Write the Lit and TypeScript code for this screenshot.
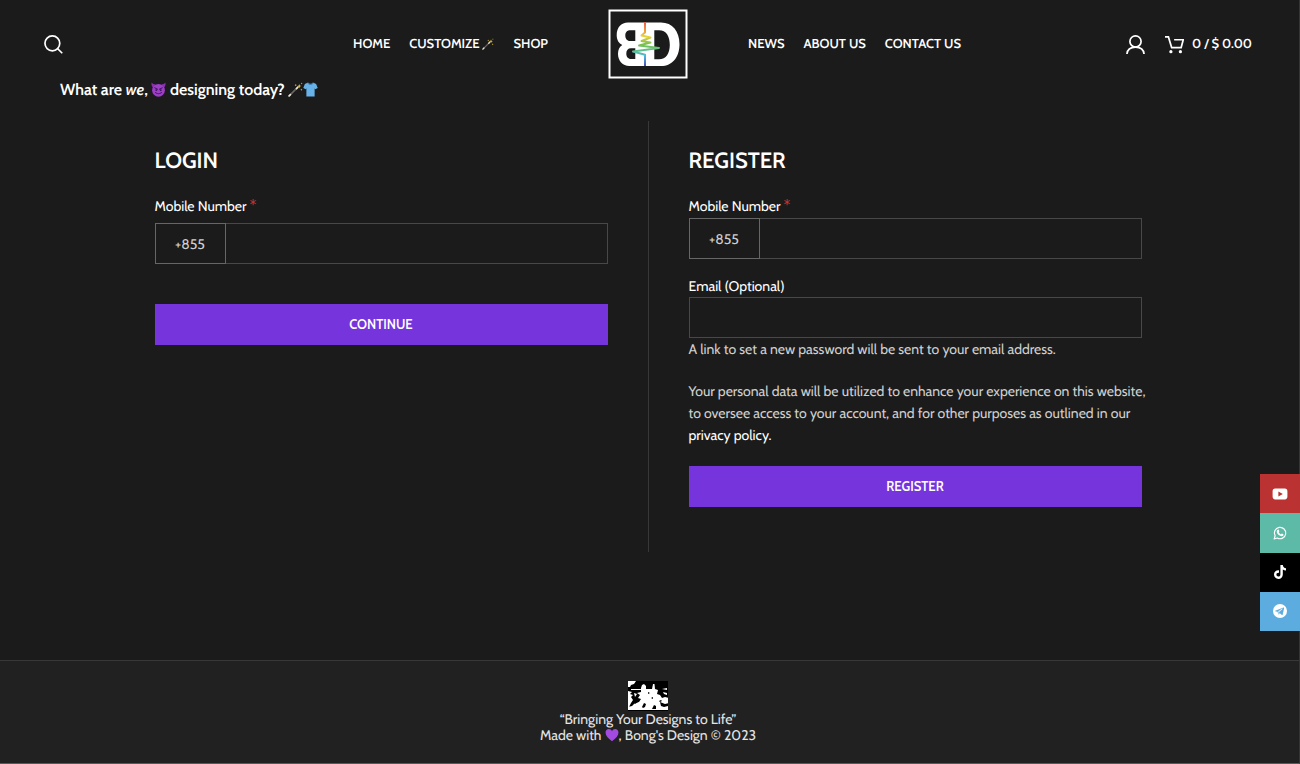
import { LitElement, html, css, svg } from "lit";
import { customElement } from "lit/decorators.js";

const wand = html`<svg class="emoji" viewBox="0 0 16 16" role="img" aria-label="magic wand">
  <path d="M1.2 14.8 10 6" stroke="#6b6660" stroke-width="1.7" stroke-linecap="round" />
  <path d="M1.2 14.8 2.6 13.4M9 7l1.6-1.6" stroke="#e9e4d6" stroke-width="1.7" stroke-linecap="round" />
  <path d="m12 2 .6 1.7 1.8.5-1.7.7-.5 1.8-.7-1.7-1.8-.6 1.7-.6zM8.300 2l.3.9.9.3-.9.4-.3.9-.4-.9-.9-.4.9-.3zM14.300 7l.3.9.9.3-.9.4-.3.9-.4-.9-.9-.4.9-.3zM14.600.4l.3.8.8.3-.8.3-.3.8-.3-.8-.8-.3.8-.3z" fill="#e8c63c" />
</svg>`;

const devil = html`<svg class="emoji" viewBox="0 0 16 16" role="img" aria-label="smiling devil">
  <path d="M.6.6C.2 3.200.8 5 2.400 6L5 2.700C3.200 2.700 1.600 2 .6.6zM15.400.6c.4 2.600-.2 4.400-1.800 5.400L11 2.700c1.800 0 3.400-.7 4.400-2.100z" fill="#8a2fb0" />
  <circle cx="8" cy="8.800" r="6.800" fill="#9b3fc4" />
  <path d="m4 6.200 3 1.500M12 6.200 9 7.700" stroke="#3d0d58" stroke-width="1" stroke-linecap="round" />
  <circle cx="5.600" cy="8.600" r="1" fill="#3d0d58" /><circle cx="10.400" cy="8.600" r="1" fill="#3d0d58" />
  <path d="M4.800 11.200c1.800 1.800 4.600 1.800 6.400 0" stroke="#3d0d58" stroke-width="1.100" fill="none" stroke-linecap="round" />
</svg>`;

const shirt = html`<svg class="emoji" viewBox="0 0 16 16" role="img" aria-label="t-shirt">
  <path d="M5.400.6 2 2 .3 6.400l2.700 1.200.6-1v8.800h8.800V6.600l.6 1 2.700-1.200L14 2 10.600.6C9.600 2.400 6.400 2.400 5.400.6z" fill="#67b2e8" />
  <path d="M5.400.8c1 1.800 4.200 1.800 5.200 0l.7.3C10.300 3.700 5.700 3.700 4.700 1.100z" fill="#2f78b4" />
</svg>`;

const heart = html`<svg class="emoji" viewBox="0 0 16 16" role="img" aria-label="purple heart">
  <path d="M8 15C3.500 11.700.6 8.800.6 5.200.6 2.800 2.300 1.200 4.300 1.200 6 1.200 7.300 2.200 8 3.600c.7-1.400 2-2.400 3.700-2.400 2 0 3.700 1.600 3.700 4C15.400 8.800 12.500 11.700 8 15z" fill="#a34be0" />
</svg>`;

const logo = html`<svg class="logo" viewBox="0 0 80 70" role="img" aria-label="Bong's Design">
  <defs>
    <linearGradient id="pulse" gradientUnits="userSpaceOnUse" x1="0" y1="13" x2="0" y2="57">
      <stop offset="0" stop-color="#e8604a" /><stop offset=".2" stop-color="#ef9a3c" />
      <stop offset=".32" stop-color="#ead23c" /><stop offset=".5" stop-color="#7cc04c" />
      <stop offset=".68" stop-color="#58c09c" /><stop offset=".78" stop-color="#4cb4e0" />
      <stop offset="1" stop-color="#4a50b8" />
    </linearGradient>
  </defs>
  <rect x="1.500" y="1.500" width="77" height="67" fill="none" stroke="#fff" stroke-width="2" />
  <path fill="#fff" fill-rule="evenodd" d="M20 13.500h33c11.500 0 18.500 9 18.500 21.700S64.500 57 53 57H21.500C14.500 57 10 51.500 10 45c0-4.600 1.500-7.300 4.300-9-3.300-1.600-5.600-4.700-5.600-10C8.700 18.500 13 13.500 20 13.500zM27.300 21.300H22c-3 0-4.700 2.200-4.700 5.200s1.700 5.500 4.700 5.500h5.300zM27.300 39.300H23c-3 0-4.700 2-4.700 5.200s1.700 5.500 4.700 5.500h4.300zM46.300 21.300V50.300H51c7.300 0 10.800-6 10.800-14.500S58.300 21.300 51 21.300z" />
  <path d="M37 13v10.500l-3.500 3 9 2-9 3.500 9 1.500-11.500 3L51 39 25 42.500l12 3.300V57" fill="none" stroke="url(#pulse)" stroke-width="2" stroke-linejoin="round" />
</svg>`;

const mark = html`<svg class="mark" viewBox="0 0 40 30" role="img" aria-label="Brand mark">
  <rect width="40" height="30" fill="#000" />
  <path fill="#fff" d="M0 0h8L6 3 3 4 2 6H0zM3 8h10v-1l1-3 2-1 2 2v3h6l1-5h1.500l.5 5 3 1-1 4 3 1 2 3 3-1 4 1v5l-4 1-5-2 1 4 3 1 4-1v4H0v-3l4-1 3-3 4-1 2-3-3-1 2-3-3-2 4-1V9H3zM0 10l4 1-2 2 3 1-2 2 2 3-2 3-2 4H0zM34 8l5-1v2zM35 11l4 1v2l-3-1zM6 12l3 1-2 3z" />
  <path fill="#000" d="m16 22 2 1-1 3-2 1-1-1zM26 24l2 1v3h-4zM20 11l2 1-2 1zM6 22l3-2 1 1-3 2zM31 20l2-1 1 1-2 1zM23 17l2-1v2z" />
</svg>`;

const socials = [
  { name: "YouTube", cls: "youtube", art: svg`<path fill="#fff" d="M3.200 2.600h9.600Q15.400 2.600 15.400 5.400v5.200q0 2.800-2.600 2.800H3.200Q.6 13.400.6 10.600V5.400q0-2.800 2.600-2.800z"/><path fill="#bb3232" d="m6.400 5.500 4.400 2.500-4.400 2.500z"/>` },
  { name: "WhatsApp", cls: "whatsapp", art: svg`<path d="m2.200 14 .9-3.200a5.700 5.700 0 1 1 2.200 2.200z" fill="none" stroke="#fff" stroke-width="1.200" stroke-linejoin="round"/><path fill="#fff" d="M5.800 4.700c.5-.2.800-.1 1 .3l.5 1.200c.1.300-.4.700-.6 1 .5 1.100 1.300 1.800 2.300 2.200.4-.3.700-.9 1-.8l1.300.7c.4.200.1 1.100-.3 1.500-.8.700-2 .5-3.300-.2-1.300-.8-2.300-1.900-2.800-3.200-.4-1.100.1-2.300.9-2.700z"/>` },
  { name: "TikTok", cls: "tiktok", art: svg`<path fill="#fff" d="M8.400 1h2.400c.2 1.900 1.300 3 3.200 3.200v2.400c-1.200 0-2.300-.4-3.200-1v4.800c0 2.700-1.900 4.600-4.400 4.600S2 13 2 10.600s2.100-4.500 5-4.200v2.500c-1.500-.3-2.600.5-2.600 1.700s.9 2 2 2 2-.8 2-2.200z"/>` },
  { name: "Telegram", cls: "telegram", art: svg`<circle cx="8" cy="8" r="7" fill="#fff"/><path fill="#5dacdf" d="m3.200 7.800 8.300-3.300c.4-.1.700.1.600.7l-1.400 6.300c-.1.500-.4.600-.8.400L7.800 10.300l-1 1c-.3.300-.5.200-.6-.2l-.7-2.300-2.200-.6c-.4-.1-.4-.3-.1-.4z"/><path d="m5.800 8.800 4.500-3-3.500 3.500-.3 1.500" fill="none" stroke="#fff" stroke-width=".6"/>` },
];

@customElement("app-root")
export class AppRoot extends LitElement {
  static styles = css`
    :host { display: flex; flex-direction: column; min-height: 100vh; box-sizing: border-box; border-right: 1px solid #353535; border-bottom: 1px solid #595959; background: #1b1b1b; color: #cfcfcf; font: 14px/22px Cabin, Lato, sans-serif; text-rendering: geometricPrecision; }
    * { box-sizing: border-box; }
    h1, h2, p { margin: 0; }
    a { color: inherit; text-decoration: none; }
    .emoji { width: 15px; height: 15px; vertical-align: -2px; fill: none; }
    .header { display: grid; grid-template-columns: 1fr auto 1fr; column-gap: 60px; align-items: center; padding: 9px 47px 0 44px; }
    .side, .nav, .tools, .cart { display: flex; align-items: center; }
    .side { justify-content: space-between; }
    .nav { gap: 19px; font-size: 13px; font-weight: 600; color: #fff; white-space: nowrap; }
    .nav .emoji { width: 12px; height: 12px; }
    .tools { gap: 20px; color: #fff; }
    .cart { gap: 8px; font-size: 13px; font-weight: 600; }
    .icon { display: block; width: 19px; height: 19px; fill: none; stroke: #fff; stroke-width: 1.8; }
    .search { border: 0; padding: 0; background: none; }
    .logo { display: block; width: 80px; height: 70px; }
    .title { padding: 0 60px; font-size: 16px; line-height: 22px; font-weight: 600; color: #fff; }
    .main { flex: 1; }
    .columns { display: grid; grid-template-columns: 1fr 1px 1fr; column-gap: 40px; max-width: 987px; margin: 20px auto 40px; }
    .page { padding-right: 3px; }
    .rule { background: #383838; }
    .panel { padding: 28px 0 45px; display: flex; flex-direction: column; }
    .heading { font-size: 22px; line-height: 24px; font-weight: 600; color: #fff; margin-bottom: 22px; }
    .label { color: #fff; }
    .required { color: #d03030; font-size: 16px; line-height: 16px; }
    .phone { display: flex; height: 41px; border: 1px solid #484848; }
    .code { width: 71px; margin: -1px 0 -1px -1px; border: 1px solid #666; display: grid; place-items: center; }
    .input { flex: 1; min-width: 0; padding: 0 15px; border: 0; outline: 0; background: none; color: #fff; font: inherit; }
    .email { flex: none; height: 41px; border: 1px solid #484848; }
    .login .phone { margin: 6px 0 40px; }
    .register .phone { margin: 1px 0 16px; }
    .button { height: 41px; border: 0; padding: 0 0 2px; background: #7635dc; color: #fff; font: 600 13px/22px Cabin, Lato, sans-serif; }
    .privacy { margin: 20px -6px 20px 0; }
    .policy { color: #fff; }
    .footer { border-top: 1px solid #383838; background: #212121; padding: 20px 3px 20px 0; display: flex; flex-direction: column; align-items: center; color: #e4e4e4; line-height: 16px; text-align: center; }
    .footer .emoji { width: 14px; height: 14px; }
    .mark { display: block; width: 40px; height: 30px; }
    .social { position: fixed; right: 0; bottom: 133px; width: 40px; height: 157px; display: flex; flex-direction: column; }
    .link { flex: 1; display: grid; place-items: center; }
    .glyph { width: 16px; height: 16px; }
    .youtube { background: #bb3232; }
    .whatsapp { background: #5cbaa6; }
    .tiktok { background: #000; }
    .telegram { background: #5dacdf; }
  `;

  render() {
    return html`
      <header class="header">
        <div class="side">
          <button class="search" aria-label="Search">
            <svg class="icon" viewBox="0 0 20 20"><circle cx="8.800" cy="8.800" r="7.800" /><path d="m14.200 14.200 5 5" /></svg>
          </button>
          <nav class="nav" aria-label="Shop">
            <a href="#">HOME</a><a href="#">CUSTOMIZE ${wand}</a><a href="#">SHOP</a>
          </nav>
        </div>
        <a href="#">${logo}</a>
        <div class="side">
          <nav class="nav" aria-label="Company">
            <a href="#">NEWS</a><a href="#">ABOUT US</a><a href="#">CONTACT US</a>
          </nav>
          <div class="tools">
            <a href="#" aria-label="My account">
              <svg class="icon" viewBox="0 0 20 20"><circle cx="10" cy="6.800" r="5.900" /><path d="M1 20c.4-4.600 4-7.300 9-7.300s8.600 2.700 9 7.300" /></svg>
            </a>
            <a class="cart" href="#">
              <svg class="icon" viewBox="0 0 20 20"><path d="M0 2h3.600L7 13.200h10L19.200 5H9.600" /><g fill="#fff" stroke="none"><circle cx="6.200" cy="17.600" r="1.700" /><circle cx="16.200" cy="17.600" r="1.700" /></g></svg>
              <span>0 / $ 0.00</span>
            </a>
          </div>
        </div>
      </header>
      <main class="main page">
        <h1 class="title">What are <em>we</em>, ${devil} designing today? ${wand}${shirt}</h1>
        <div class="columns">
          <form class="panel login">
            <h2 class="heading">LOGIN</h2>
            <label class="label" for="login-phone">Mobile Number <span class="required">*</span></label>
            <div class="phone"><span class="code">+855</span><input class="input" id="login-phone" type="tel" /></div>
            <button class="button" type="button">CONTINUE</button>
          </form>
          <div class="rule"></div>
          <form class="panel register">
            <h2 class="heading">REGISTER</h2>
            <label class="label" for="register-phone">Mobile Number <span class="required">*</span></label>
            <div class="phone"><span class="code">+855</span><input class="input" id="register-phone" type="tel" /></div>
            <label class="label" for="register-email">Email (Optional)</label>
            <input class="input email" id="register-email" type="email" />
            <p>A link to set a new password will be sent to your email address.</p>
            <p class="privacy">Your personal data will be utilized to enhance your experience on this website, to oversee access to your account, and for other purposes as outlined in our <a class="policy" href="#">privacy policy.</a></p>
            <button class="button" type="button">REGISTER</button>
          </form>
        </div>
      </main>
      <footer class="footer">
        ${mark}
        <p>“Bringing Your Designs to Life”<br />Made with ${heart}, Bong's Design © 2023</p>
      </footer>
      <aside class="social" aria-label="Social links">
        ${socials.map((s) => html`<a class="link ${s.cls}" href="#" aria-label=${s.name}><svg class="glyph" viewBox="0 0 16 16">${s.art}</svg></a>`)}
      </aside>
    `;
  }
}
